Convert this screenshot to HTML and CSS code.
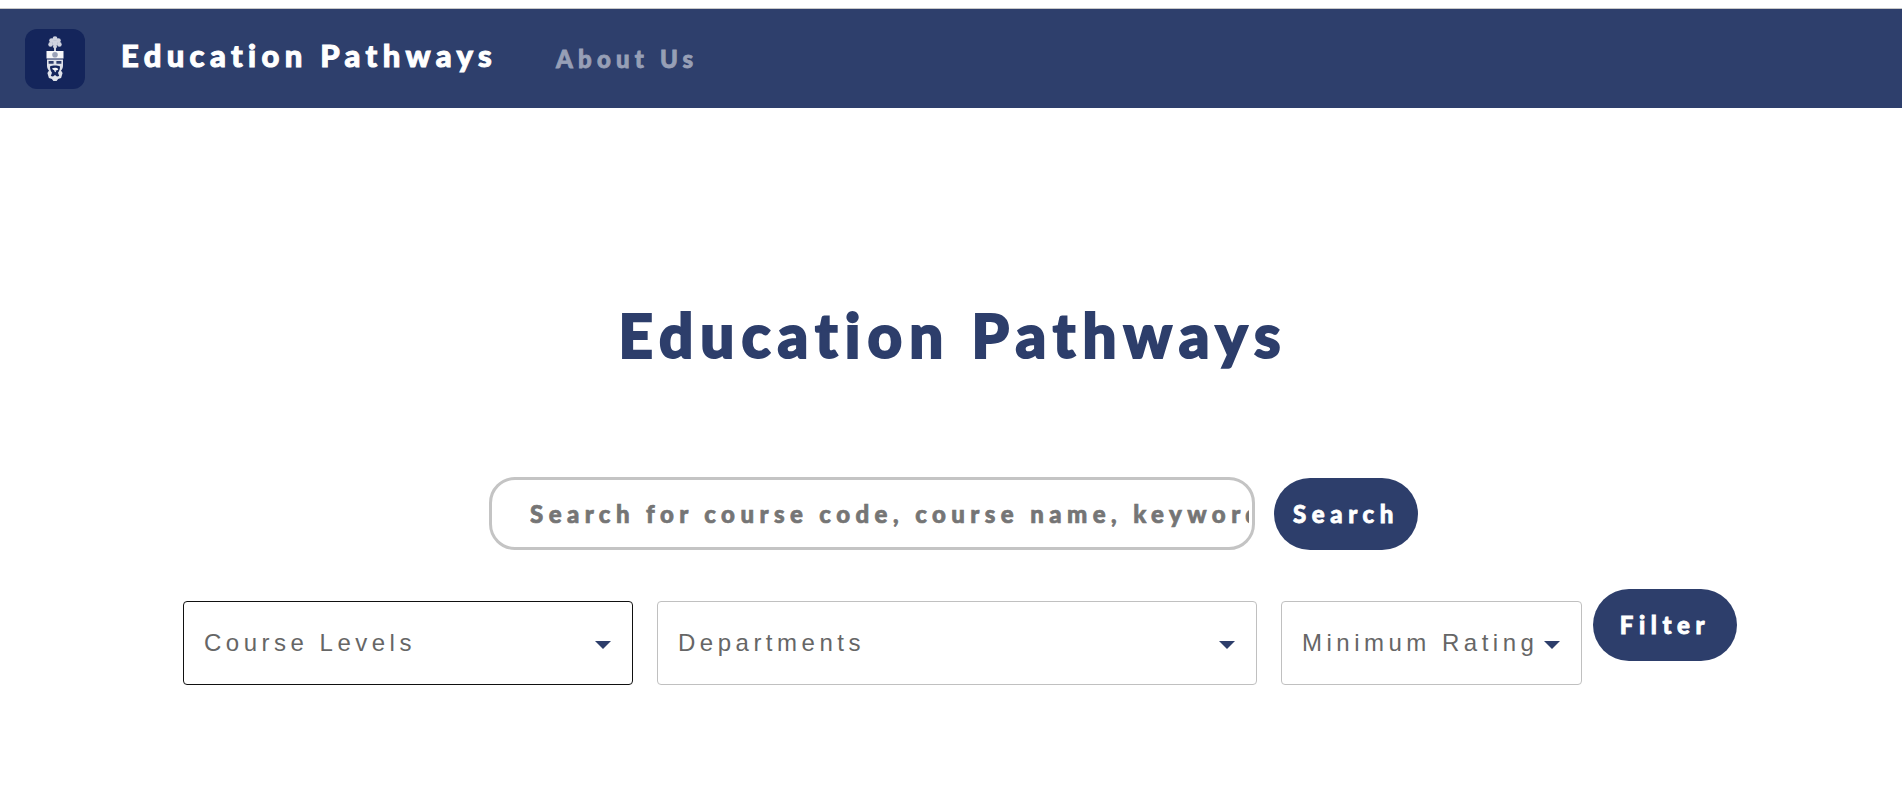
FILE: index.html
```html
<!DOCTYPE html>
<html lang="en">
<head>
<meta charset="utf-8">
<title>Education Pathways</title>
<link rel="stylesheet" href="styles.css">
</head>
<body>
<header class="navbar">
  <a class="logo" href="#" aria-label="University of Toronto crest">
    <svg width="18" height="46" viewBox="0 0 18 46">
      <g fill="#cfd3df">
        <circle cx="9" cy="2.6" r="2.4"/>
        <circle cx="5.6" cy="4.6" r="2.4"/>
        <circle cx="12.4" cy="4.6" r="2.4"/>
        <circle cx="4.6" cy="8.4" r="2.3"/>
        <circle cx="13.4" cy="8.4" r="2.3"/>
        <circle cx="9" cy="7" r="2.8"/>
        <circle cx="9" cy="10.6" r="2"/>
        <rect x="8" y="11" width="2" height="4.5"/>
      </g>
      <rect x="0.5" y="15" width="17" height="7.5" fill="#f6f7f9"/>
      <circle cx="9" cy="18.7" r="2.8" fill="#9aa2b8"/>
      <path d="M1 23.5h16v6c0 2-.6 3.6-2 5l1.600 2.500-1.500 5-3 1-1.500 2h-3.200l-1.500-2-3-1-1.500-5 1.600-2.500c-1.400-1.400-2-3-2-5z" fill="#dfe2ea"/>
      <path d="M2.600 25h5v2.800h-5zM10.400 25h5v2.800h-5z" fill="#2e3d6c"/>
      <path d="M4 30.500c2-1.400 8-1.400 10 0 0 2.700-.8 4.600-2 6.300l1.200 3.200-2.200.5-2-1.500-2 1.500-2.200-.5 1.200-3.200c-1.200-1.700-2-3.600-2-6.300z" fill="#14255b"/>
      <path d="M6 32.600c2-1.300 5-1 6.300.4-.6 1.300-1.500 1.600-2.600 1.300l.2 2c-1-.2-1.700-1-1.700-2.300-.8.300-1.600-.3-2.200-1.400z" fill="#f6f7f9"/>
    </svg>
  </a>
  <a class="brand" href="#">Education Pathways</a>
  <a class="nav-link" href="#">About Us</a>
</header>
<main class="page">
  <h1 class="title">Education Pathways</h1>
  <form class="search-row">
    <input class="search-input" type="text" placeholder="Search for course code, course name, keyword ...">
    <button class="pill" type="button">Search</button>
  </form>
  <div class="filter-row">
    <div class="select select-active select-levels"><span>Course Levels</span><i class="caret"></i></div>
    <div class="select select-departments"><span>Departments</span><i class="caret"></i></div>
    <div class="select select-rating"><span>Minimum Rating</span><i class="caret"></i></div>
    <button class="pill pill-filter" type="button">Filter</button>
  </div>
</main>
</body>
</html>
```
FILE: styles.css
```css
* { box-sizing: border-box; }
html, body { margin: 0; padding: 0; background: #fff; }
body { padding-top: 8px; height: 805px; overflow: hidden; font-family: "Lato", "Liberation Sans", sans-serif; }

.navbar {
  height: 100px;
  background: #2e3f6c;
  border-top: 1px solid #c8c8c8;
  display: flex;
  align-items: center;
  padding-left: 25px;
}
.logo {
  width: 60px;
  height: 60px;
  border-radius: 12px;
  background: #14255b;
  display: flex;
  align-items: center;
  justify-content: center;
  flex: none;
}
.brand {
  margin-left: 36px;
  margin-bottom: 7px;
  color: #fff;
  font-size: 31px;
  font-weight: 900;
  letter-spacing: 5.35px;
  -webkit-text-stroke: 1px #fff;
  text-decoration: none;
}
.nav-link {
  margin-left: 59px;
  color: #979fb6;
  font-size: 24px;
  font-weight: 900;
  letter-spacing: 5.2px;
  -webkit-text-stroke: 0.8px #979fb6;
  text-decoration: none;
}

.page { display: flex; flex-direction: column; align-items: center; }
.title {
  margin: 188px 0 0;
  padding-left: 4px;
  height: 78px;
  line-height: 78px;
  color: #2d3e6b;
  font-size: 60px;
  font-weight: 900;
  letter-spacing: 7.1px;
  -webkit-text-stroke: 2px #2d3e6b;
}
.search-row {
  margin-top: 103px;
  display: flex;
  gap: 19px;
  align-items: center;
  padding-left: 5px;
}
.search-input {
  width: 766px;
  height: 73px;
  border: 3px solid #c4c4c4;
  border-radius: 26px;
  padding: 0 3px 0 38px;
  background: #fff;
  font-family: inherit;
  font-size: 24px;
  font-weight: 900;
  letter-spacing: 5.43px;
  -webkit-text-stroke: 0.7px #757575;
  outline: none;
}
.search-input::placeholder { color: #757575; opacity: 1; }
.pill {
  width: 144px;
  height: 72px;
  margin-top: 1px;
  padding: 0 0 2px;
  border: 0;
  border-radius: 37px;
  background: #2d3e6b;
  color: #fff;
  font-family: inherit;
  font-size: 24px;
  font-weight: 900;
  letter-spacing: 5.6px;
  -webkit-text-stroke: 0.8px #fff;
}
.filter-row {
  margin-top: 38px;
  display: flex;
  align-items: flex-start;
  gap: 24px;
  padding-left: 18px;
}
.select {
  margin-top: 13px;
  height: 84px;
  border: 1px solid #c0c0c0;
  border-radius: 4px;
  background: #fff;
  display: flex;
  align-items: center;
  justify-content: space-between;
  padding: 0 21px 1px 20px;
  color: #666;
  font-family: "Liberation Sans", Arial, sans-serif;
  font-size: 24px;
  letter-spacing: 4.5px;
}
.select-active { border-color: #111; }
.select-levels { width: 450px; }
.select-departments { width: 600px; }
.select-rating { width: 301px; }
.caret {
  width: 0;
  height: 0;
  flex: none;
  border-left: 8px solid transparent;
  border-right: 8px solid transparent;
  border-top: 8px solid #2d3e6b;
  margin-top: 4px;
}
.pill-filter { margin-left: -13px; }
```
